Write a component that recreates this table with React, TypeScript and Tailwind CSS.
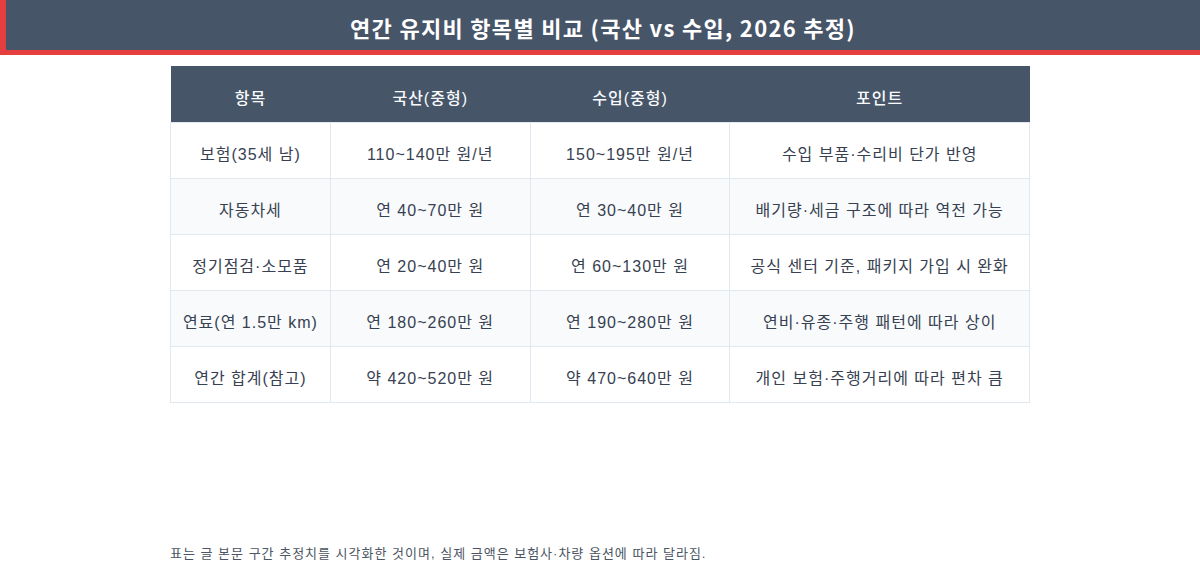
const rows = [
  ["보험(35세 남)", "110~140만 원/년", "150~195만 원/년", "수입 부품·수리비 단가 반영"],
  ["자동차세", "연 40~70만 원", "연 30~40만 원", "배기량·세금 구조에 따라 역전 가능"],
  ["정기점검·소모품", "연 20~40만 원", "연 60~130만 원", "공식 센터 기준, 패키지 가입 시 완화"],
  ["연료(연 1.5만 km)", "연 180~260만 원", "연 190~280만 원", "연비·유종·주행 패턴에 따라 상이"],
  ["연간 합계(참고)", "약 420~520만 원", "약 470~640만 원", "개인 보험·주행거리에 따라 편차 큼"],
];

const headers = ["항목", "국산(중형)", "수입(중형)", "포인트"];
const widths = ["w-[160px]", "w-[200px]", "w-[200px]", "w-[300px]"];

export default function App() {
  return (
    <div className="w-[1200px] h-[570px] bg-white flex flex-col font-['Liberation_Sans','Noto_Sans_CJK_KR',sans-serif]">
      {/* Title bar */}
      <div className="h-[55px] pt-[4px] bg-[#475569] border-l-[6px] border-b-[5px] border-[#e53e3e] flex items-center justify-center">
        <h1 className="text-[22px] font-bold text-white tracking-[1.3px] font-['Noto_Sans_CJK_KR',sans-serif]">
          연간 유지비 항목별 비교 (국산 vs 수입, 2026 추정)
        </h1>
      </div>

      {/* Table */}
      <div className="mt-[11px] mx-auto w-[860px]">
        <table className="w-full border-collapse text-[16px] tracking-[1px] text-[#374151]">
          <thead>
            <tr className="h-[56px] bg-[#475569] text-[#f8fafc]">
              {headers.map((h, i) => (
                <th key={h} className={`${widths[i]} font-medium pt-[10px]`}>
                  {h}
                </th>
              ))}
            </tr>
          </thead>
          <tbody>
            {rows.map((r, ri) => (
              <tr key={ri} className={ri % 2 === 1 ? "h-[56px] bg-[#f8fafc]" : "h-[56px] bg-white"}>
                {r.map((c, ci) => (
                  <td key={ci} className="border border-[#e2e8f0] text-center pt-[10px]">
                    {c}
                  </td>
                ))}
              </tr>
            ))}
          </tbody>
        </table>
      </div>

      {/* Footnote */}
      <p className="mt-auto mb-[7px] ml-[170px] text-[13px] tracking-[1px] text-[#4b5563]">
        표는 글 본문 구간 추정치를 시각화한 것이며, 실제 금액은 보험사·차량 옵션에 따라 달라짐.
      </p>
    </div>
  );
}
